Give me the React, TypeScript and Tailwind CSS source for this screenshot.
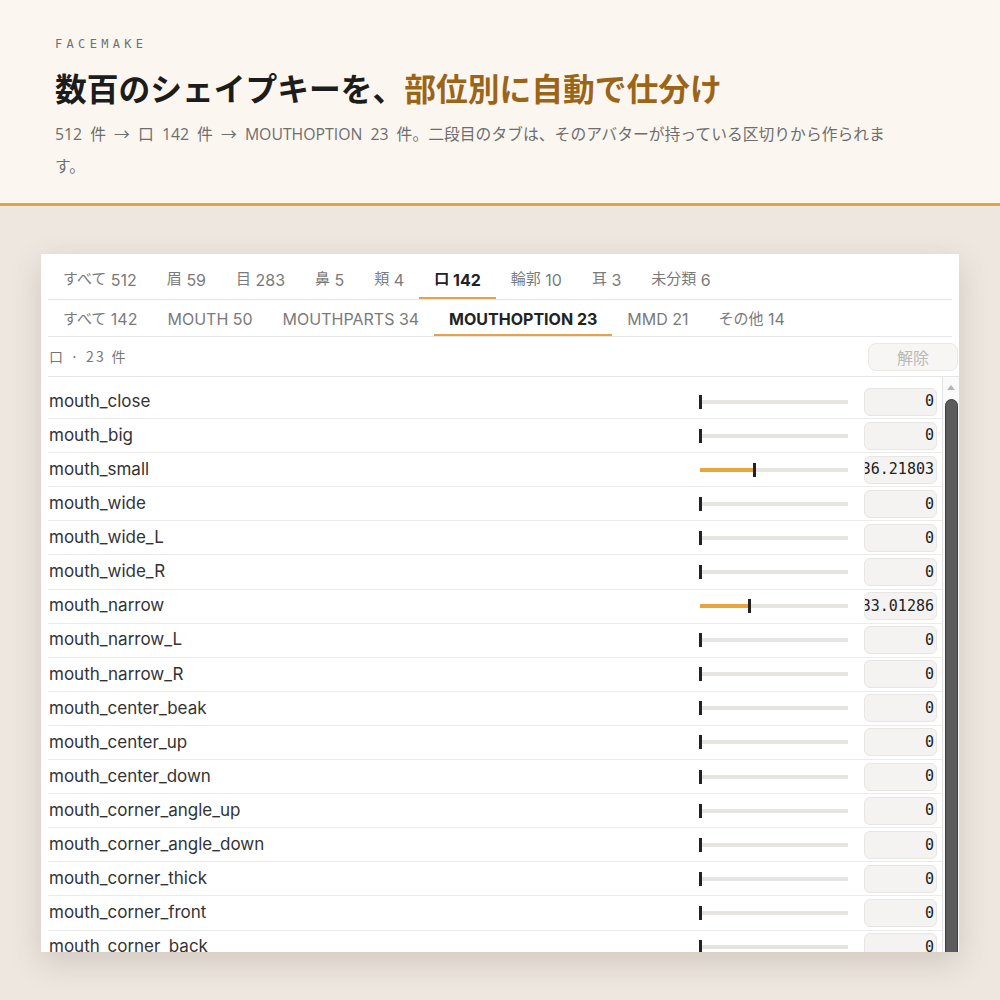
import React from 'react';

const sans = '"Inter", "Noto Sans CJK JP", sans-serif';
const jp = '"Noto Sans CJK JP", sans-serif';
const lead = '"Open Sans", "Noto Sans CJK JP", sans-serif';
const mono = '"DejaVu Sans Mono", "Liberation Mono", monospace';

// jp part is drawn a little smaller than the latin count, as in the reference
const groups = [
  { jp: 'すべて', num: '512' },
  { jp: '眉', num: '59' },
  { jp: '目', num: '283' },
  { jp: '鼻', num: '5' },
  { jp: '頬', num: '4' },
  { jp: '口', num: '142', active: true },
  { jp: '輪郭', num: '10' },
  { jp: '耳', num: '3' },
  { jp: '未分類', num: '6' },
];

const sections = [
  { jp: 'すべて', num: '142' },
  { jp: 'MOUTH', num: '50', latin: true },
  { jp: 'MOUTHPARTS', num: '34', latin: true },
  { jp: 'MOUTHOPTION', num: '23', latin: true, active: true },
  { jp: 'MMD', num: '21', latin: true },
  { jp: 'その他', num: '14' },
];

const keys: { name: string; value: number; text?: string }[] = [
  { name: 'mouth_close', value: 0 },
  { name: 'mouth_big', value: 0 },
  { name: 'mouth_small', value: 36.21803, text: '36.21803' },
  { name: 'mouth_wide', value: 0 },
  { name: 'mouth_wide_L', value: 0 },
  { name: 'mouth_wide_R', value: 0 },
  { name: 'mouth_narrow', value: 33.01286, text: '33.01286' },
  { name: 'mouth_narrow_L', value: 0 },
  { name: 'mouth_narrow_R', value: 0 },
  { name: 'mouth_center_beak', value: 0 },
  { name: 'mouth_center_up', value: 0 },
  { name: 'mouth_center_down', value: 0 },
  { name: 'mouth_corner_angle_up', value: 0 },
  { name: 'mouth_corner_angle_down', value: 0 },
  { name: 'mouth_corner_thick', value: 0 },
  { name: 'mouth_corner_front', value: 0 },
  { name: 'mouth_corner_back', value: 0 },
];

function Tab({ jp: label, num, latin, active, pt }: { jp: string; num: string; latin?: boolean; active?: boolean; pt: string }) {
  return (
    <div
      className={
        (active
          ? 'border-[#e4a346] font-bold text-[#222] '
          : 'border-transparent text-[#7a7a7a] ') +
        'flex items-center border-b-2 px-[15px] text-[16px] ' +
        pt
      }
    >
      <span className={latin ? '' : 'text-[15px]'}>{label}</span>&nbsp;{num}
    </div>
  );
}

function KeyRow({ name, value, text }: { name: string; value: number; text?: string }) {
  return (
    <div className="flex h-[34.1px] items-center border-b border-[#ebebea]">
      <span className="flex-1 pl-[1px] text-[17px] text-[#333]" style={{ fontFamily: sans }}>
        {name}
      </span>
      {/* slider */}
      <div className="relative mr-[16px] h-[4px] w-[148px] bg-[#e6e4e0]">
        <div className="absolute left-0 top-0 h-[4px] bg-[#e9a43c]" style={{ width: `${value * 1.48}px` }} />
        <div
          className="absolute top-[-5px] h-[14px] w-[3px] bg-[#222]"
          style={{ left: `${Math.max(-1, value * 1.48 - 1)}px` }}
        />
      </div>
      <div
        className="mr-[5px] flex h-[28px] w-[73px] items-center justify-end overflow-hidden whitespace-nowrap rounded-md border border-[#e8e6e3] bg-[#f4f3f1] pr-[2px] text-[15px] text-[#222]"
        style={{ fontFamily: mono }}
      >
        {text ?? '0'}
      </div>
    </div>
  );
}

export default function App() {
  return (
    <div className="min-h-[1000px] bg-[#eee7e0]">
      {/* Header */}
      <header className="h-[206px] border-b-[3px] border-[#e4a346] bg-[#fbf7f0] pl-[55px] pt-[35px]">
        <div className="text-[12px] tracking-[0.36em] text-[#6f6f6f]" style={{ fontFamily: mono }}>
          FACEMAKE
        </div>
        <h1 className="mt-[14px] text-[31.75px] font-bold leading-[40px] text-[#1c1c1c]" style={{ fontFamily: jp }}>
          数百のシェイプキーを、<span className="text-[#9c6417]">部位別に自動で仕分け</span>
        </h1>
        <p
          className="mt-[11px] w-[850px] text-[15.8px] leading-[32px] text-[#6e6e6e] [word-spacing:4px]"
          style={{ fontFamily: lead }}
        >
          512 件 → 口 142 件 → MOUTHOPTION 23 件。二段目のタブは、そのアバターが持っている区切りから作られます。
        </p>
      </header>

      {/* Panel */}
      <div className="ml-[41px] mt-[48px] h-[698px] w-[918px] overflow-hidden bg-white shadow-[0_10px_30px_rgba(80,60,40,0.18)]">
        {/* group tabs */}
        <div className="mx-[7px] flex h-[46px] border-b border-[#e6e6e6]" style={{ fontFamily: sans }}>
          {groups.map((g) => (
            <Tab key={g.jp} {...g} pt="pt-[8px]" />
          ))}
        </div>
        {/* section tabs */}
        <div className="mx-[7px] flex h-[37px] border-b border-[#e6e6e6]" style={{ fontFamily: sans }}>
          {sections.map((s) => (
            <Tab key={s.jp} {...s} pt="pt-[4px]" />
          ))}
        </div>
        {/* info row */}
        <div className="ml-[7px] flex h-[40px] items-center justify-between border-b border-[#e6e6e6]">
          <span className="pl-[1px] text-[14px] tracking-[0.16em] text-[#777]" style={{ fontFamily: jp }}>
            口 · 23 件
          </span>
          <button
            className="mr-[1px] h-[28px] w-[90px] rounded-lg border border-[#ebe9e6] bg-[#f7f6f4] text-[16px] text-[#b9b9b9]"
            style={{ fontFamily: jp }}
          >
            解除
          </button>
        </div>
        {/* list + scrollbar */}
        <div className="flex pt-[8px]">
          <div className="ml-[7px] flex-1">
            {keys.map((k) => (
              <KeyRow key={k.name} {...k} />
            ))}
          </div>
          <div className="-mt-[8px] flex w-[17px] flex-col items-center border-l border-[#e3e3e3] bg-[#fafafa]">
            <svg width="10" height="8" viewBox="0 0 10 8" className="mt-[6px]">
              <path d="M1 7 L5 2 L9 7 Z" fill="#b5b5b5" />
            </svg>
            <div className="mt-[8px] h-[600px] w-[13px] rounded-t-[7px] border border-[#3e3e3e] bg-[#5c5c5c]" />
          </div>
        </div>
      </div>
    </div>
  );
}
